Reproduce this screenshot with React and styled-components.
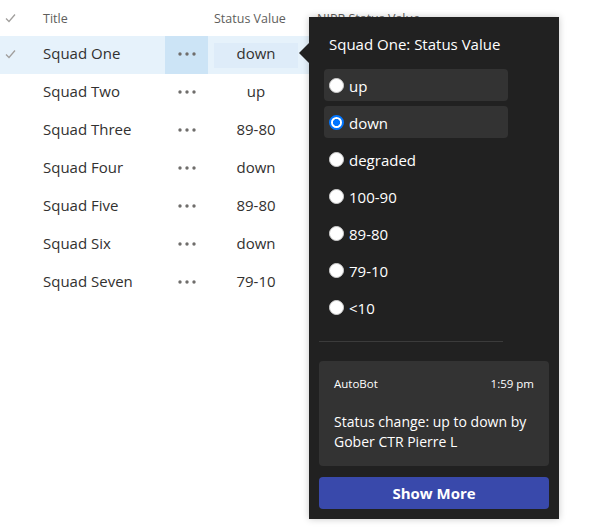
import React, { useState } from "react"
import styled, { createGlobalStyle } from "styled-components"

const GlobalStyle = createGlobalStyle`
  html, body {
    margin: 0;
    padding: 0;
    background: #ffffff;
    font-family: "Open Sans", "Noto Sans", sans-serif;
  }
`

const Page = styled.div`
  position: relative;
  width: 590px;
  height: 528px;
  overflow: hidden;
`

const Table = styled.div`
  display: flex;
  flex-direction: column;
  width: 470px;
`

const HeaderRow = styled.div`
  display: flex;
  align-items: center;
  height: 36px;
  color: #605e5c;
  font-size: 12.5px;
`

const Row = styled.div`
  display: flex;
  align-items: center;
  height: 38px;
  color: #323130;
  font-size: 15px;
  background: ${props => (props.selected ? "#e6f2fb" : "transparent")};
`

const CheckCell = styled.div`
  width: 43px;
  height: 100%;
  display: flex;
  align-items: center;
  padding-left: 5px;
  padding-bottom: ${props => (props.lift ? "3px" : "0")};
  box-sizing: border-box;
`

const TitleCell = styled.div`
  width: 122px;
  white-space: nowrap;
  padding-bottom: ${props => (props.lift ? "4px" : "0")};
`

const MoreCell = styled.div`
  width: 43px;
  height: 100%;
  display: flex;
  align-items: center;
  justify-content: center;
  padding-bottom: 2px;
  box-sizing: border-box;
  background: ${props => (props.active ? "#cce4f6" : "transparent")};
`

const StatusCell = styled.div`
  width: 96px;
  height: 100%;
  display: flex;
  align-items: center;
  padding-left: 6px;
  box-sizing: border-box;
`

const StatusHeader = styled.div`
  width: 109px;
  padding-left: 6px;
  box-sizing: border-box;
  white-space: nowrap;
`

const StatusBox = styled.div`
  width: 84px;
  height: 25px;
  display: flex;
  align-items: center;
  justify-content: center;
  padding-bottom: 4px;
  box-sizing: border-box;
  background: ${props => (props.active ? "#deecf9" : "transparent")};
`

const NiprHeader = styled.div`
  white-space: nowrap;
`

const Callout = styled.div`
  position: absolute;
  left: 309px;
  top: 17px;
  width: 250px;
  height: 502px;
  box-sizing: border-box;
  padding: 17px 10px 10px;
  background: #212121;
  color: #ffffff;
  box-shadow: 0 0 7px rgba(0, 0, 0, 0.22);
  display: flex;
  flex-direction: column;

  &::before {
    content: "";
    position: absolute;
    left: -10px;
    top: 26px;
    border-style: solid;
    border-width: 10px 10px 10px 0;
    border-color: transparent #212121 transparent transparent;
  }
`

const CalloutTitle = styled.div`
  padding-left: 10px;
  font-size: 15px;
  line-height: 20px;
  margin-bottom: 15px;
`

const OptionList = styled.div`
  display: flex;
  flex-direction: column;
  gap: 5px;
  margin-left: 5px;
  width: 184px;
`

const Option = styled.label`
  display: flex;
  align-items: center;
  gap: 5px;
  height: 32px;
  padding-left: 5px;
  border-radius: 4px;
  font-size: 15px;
  cursor: pointer;
  background: ${props => (props.shaded ? "#333333" : "transparent")};

  & > span {
    padding-top: 2px;
  }
`

const Radio = styled.input`
  appearance: none;
  margin: 0;
  width: 15px;
  height: 15px;
  border-radius: 50%;
  box-sizing: border-box;
  background: #ffffff;
  border: 1px solid #d0d0d0;

  &:checked {
    border: 2px solid #0075ff;
    background: radial-gradient(circle, #0075ff 0 3.3px, #ffffff 3.8px);
  }
`

const Divider = styled.div`
  width: 184px;
  height: 1px;
  background: #3b3b3b;
  margin: 18px 0 19px;
`

const Card = styled.div`
  background: #333333;
  border-radius: 4px;
  padding: 15px 15px 14px;
  display: flex;
  flex-direction: column;
`

const CardHead = styled.div`
  display: flex;
  justify-content: space-between;
  font-size: 11.5px;
  line-height: 16px;
  margin-bottom: 20px;
`

const CardText = styled.div`
  font-size: 14px;
  line-height: 20px;
`

const ShowMore = styled.button`
  margin-top: 11px;
  height: 32px;
  border: none;
  border-radius: 4px;
  background: #3949ab;
  color: #ffffff;
  font-family: inherit;
  font-size: 15px;
  font-weight: 700;
  cursor: pointer;
`

const Check = ({ color = "#a19f9d" }) => (
  <svg width="11" height="10" viewBox="0 0 11 10">
    <path d="M1 5.5 L4 8.5 L10 1.5" fill="none" stroke={color} strokeWidth="1.3" />
  </svg>
)

const Dots = () => (
  <svg width="18" height="4" viewBox="0 0 18 4">
    <circle cx="2" cy="2" r="1.7" fill="#6f6d6b" />
    <circle cx="9" cy="2" r="1.7" fill="#6f6d6b" />
    <circle cx="16" cy="2" r="1.7" fill="#6f6d6b" />
  </svg>
)

const squads = [
  { name: "Squad One", status: "down" },
  { name: "Squad Two", status: "up" },
  { name: "Squad Three", status: "89-80" },
  { name: "Squad Four", status: "down" },
  { name: "Squad Five", status: "89-80" },
  { name: "Squad Six", status: "down" },
  { name: "Squad Seven", status: "79-10" },
]

const options = ["up", "down", "degraded", "100-90", "89-80", "79-10", "<10"]

const App = () => {
  const [value, setValue] = useState("down")

  return (
    <Page>
      <GlobalStyle />
      <Table>
        <HeaderRow>
          <CheckCell>
            <Check />
          </CheckCell>
          <TitleCell>Title</TitleCell>
          <MoreCell />
          <StatusHeader>Status Value</StatusHeader>
          <NiprHeader>NIPR Status Value</NiprHeader>
        </HeaderRow>
        {squads.map((squad, i) => (
          <Row key={squad.name} selected={i === 0}>
            <CheckCell lift>{i === 0 && <Check />}</CheckCell>
            <TitleCell lift>{squad.name}</TitleCell>
            <MoreCell active={i === 0}>
              <Dots />
            </MoreCell>
            <StatusCell>
              <StatusBox active={i === 0}>{squad.status}</StatusBox>
            </StatusCell>
          </Row>
        ))}
      </Table>

      <Callout>
        <CalloutTitle>Squad One: Status Value</CalloutTitle>
        <OptionList>
          {options.map((opt, i) => (
            <Option key={opt} shaded={i < 2}>
              <Radio
                type="radio"
                name="status"
                checked={value === opt}
                onChange={() => setValue(opt)}
              />
              <span>{opt}</span>
            </Option>
          ))}
        </OptionList>
        <Divider />
        <Card>
          <CardHead>
            <span>AutoBot</span>
            <span>1:59 pm</span>
          </CardHead>
          <CardText>
            Status change: up to down by
            <br />
            Gober CTR Pierre L
          </CardText>
        </Card>
        <ShowMore>Show More</ShowMore>
      </Callout>
    </Page>
  )
}

export default App
